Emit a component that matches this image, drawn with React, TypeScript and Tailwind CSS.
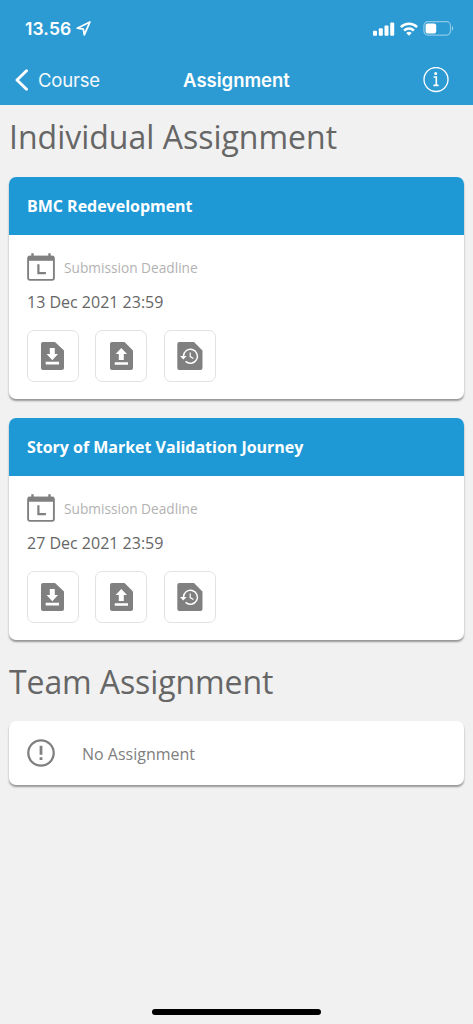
import React from "react";

const assignments = [
  { id: 1, title: "BMC Redevelopment", deadline: "13 Dec 2021 23:59" },
  { id: 2, title: "Story of Market Validation Journey", deadline: "27 Dec 2021 23:59" },
];

const StatusBar = () => (
  <div className="flex h-[55px] items-center justify-between pt-[2px] pl-[25px] pr-[19px]">
    <div className="flex items-center gap-[5px]">
      <span className="text-[17.5px] font-semibold leading-5 tracking-[0.1px]">13.56</span>
      <svg width="15" height="15" viewBox="0 0 15 15" fill="none" stroke="currentColor" strokeWidth="1.8" strokeLinejoin="round">
        <path d="M13.9 1 1.3 7.2l6.1.9.9 5.7z" />
      </svg>
    </div>
    <div className="flex items-center">
      <svg width="22" height="14" viewBox="0 0 22 14" fill="currentColor">
        <rect x="0" y="8.7" width="4" height="5" rx="1" />
        <rect x="5.8" y="6.3" width="4" height="7.4" rx="1" />
        <rect x="11.5" y="3.5" width="4" height="10.2" rx="1" />
        <rect x="17.2" y="0.5" width="4" height="13.2" rx="1" />
      </svg>
      <svg className="ml-[5px]" width="18" height="14" viewBox="0 0 18 14" fill="none" stroke="currentColor" strokeWidth="2.5">
        <path d="M0.9 5.2a11.4 11.4 0 0 1 16.2 0" />
        <path d="M4.1 8.6a6.9 6.9 0 0 1 9.8 0" />
        <path d="M9 13.8 6.3 11.1a3.8 3.8 0 0 1 5.4 0z" fill="currentColor" stroke="none" />
      </svg>
      <svg className="ml-[5px]" width="31" height="15" viewBox="0 0 31 15">
        <rect x="0.9" y="0.7" width="26.6" height="13.4" rx="4" fill="none" stroke="white" strokeOpacity="0.45" strokeWidth="1.2" />
        <rect x="2.6" y="2.4" width="10.6" height="10" rx="2" fill="white" />
        <path d="M29 5.2v4.4c1.6-.6 1.6-3.8 0-4.4z" fill="white" fillOpacity="0.55" />
      </svg>
    </div>
  </div>
);

const Header = () => (
  <header className="h-[105px] bg-[#2d9bd3] font-[Inter,sans-serif] text-white">
    <StatusBar />
    <div className="grid h-[50px] grid-cols-[1fr_auto_1fr] items-center px-[15px]">
      <button className="flex items-center gap-[9px] text-left">
        <svg width="14" height="22" viewBox="0 0 14 22" fill="none" stroke="currentColor" strokeWidth="2.9" strokeLinecap="round" strokeLinejoin="round">
          <path d="M11.5 1.8 2 11l9.5 9.2" />
        </svg>
        <span className="text-[18.5px] leading-6 tracking-[-0.2px] opacity-95">Course</span>
      </button>
      <h1 className="whitespace-nowrap text-center text-[18.5px] font-semibold leading-6">Assignment</h1>
      <button className="mr-[9px] justify-self-end">
        <svg width="26" height="26" viewBox="0 0 26 26" fill="none" stroke="currentColor">
          <circle cx="13" cy="12.5" r="12" strokeWidth="1.3" />
          <circle cx="12.7" cy="6.4" r="1.5" fill="currentColor" stroke="none" />
          <path d="M10.6 10h2.7v8.2M10.4 18.4h5.2" strokeWidth="1.6" />
        </svg>
      </button>
    </div>
  </header>
);

const CalendarIcon = () => (
  <svg width="28" height="28" viewBox="0 0 28 28" fill="none" stroke="#808080">
    <rect x="1.1" y="3.6" width="25.8" height="23.3" rx="1.8" strokeWidth="1.9" />
    <path d="M1 5.3h26" strokeWidth="5" />
    <path d="M5.5.3v4M22.5.3v4" strokeWidth="2.4" />
    <path d="M11.4 11.2v9h7.5" strokeWidth="2.2" />
  </svg>
);

const DownloadIcon = () => (
  <svg width="23" height="28" viewBox="0 0 23 28">
    <path d="M2 0h12l9 8.5V26a2 2 0 0 1-2 2H2a2 2 0 0 1-2-2V2a2 2 0 0 1 2-2z" fill="#808080" />
    <path d="M8.8 6h5v6H17l-5.7 6.3L5.6 12h3.2zM4.7 19.8H18v2.7H4.7z" fill="white" />
  </svg>
);

const UploadIcon = () => (
  <svg width="23" height="28" viewBox="0 0 23 28">
    <path d="M2 0h12.5L23 8.5V26a2 2 0 0 1-2 2H2a2 2 0 0 1-2-2V2a2 2 0 0 1 2-2z" fill="#808080" />
    <path d="M11.3 6 5.6 12.1h3.2V18h5v-5.9H17zM4.7 20.2H18v2.6H4.7z" fill="white" />
  </svg>
);

const HistoryIcon = () => (
  <svg width="26" height="28" viewBox="0 0 26 28">
    <path d="M2.3 0H17l8.5 8.5V26a2 2 0 0 1-2 2H2.3a2 2 0 0 1-2-2V2a2 2 0 0 1 2-2z" fill="#808080" />
    <path d="M6.4 14.3a7 7 0 1 1 2.2 5.1" fill="none" stroke="white" strokeWidth="1.5" />
    <path d="M3 14h6.6l-3.3 3.6z" fill="white" />
    <path d="M13.2 10.4v4.2l3.2 2" fill="none" stroke="white" strokeWidth="1.2" />
  </svg>
);

const ActionButton = ({ children }: { children: React.ReactNode }) => (
  <button className="flex size-[52px] items-center justify-center rounded-[7px] border border-[#e2e2e2] bg-white">
    {children}
  </button>
);

const AssignmentCard = ({ title, deadline }: { title: string; deadline: string }) => (
  <div className="h-[222px] overflow-hidden rounded-[7px] bg-white shadow-[0_2px_2px_rgba(0,0,0,0.38)]">
    <div className="flex h-[58px] items-center bg-[#1e99d6] pl-[18px]">
      <h3 className="whitespace-nowrap text-base font-bold leading-6 tracking-[-0.02px] text-white">{title}</h3>
    </div>
    <div className="pl-[18px] pt-[18px]">
      <div className="flex h-7 items-center gap-[9px]">
        <CalendarIcon />
        <span className="pt-px text-[13.7px] leading-5 text-[#b2b2b2]">Submission Deadline</span>
      </div>
      <p className="mt-[9px] text-base leading-6 text-[#666666]">{deadline}</p>
      <div className="-ml-[0.5px] mt-4 flex gap-[16.5px]">
        <ActionButton>
          <DownloadIcon />
        </ActionButton>
        <ActionButton>
          <UploadIcon />
        </ActionButton>
        <ActionButton>
          <HistoryIcon />
        </ActionButton>
      </div>
    </div>
  </div>
);

const App = () => {
  return (
    <div className="flex h-[1024px] w-[473px] flex-col bg-[#f1f1f1] font-['Open_Sans',sans-serif]">
      <Header />

      <main className="flex-1 px-[9px] pt-[10px]">
        <h2 className="whitespace-nowrap text-[32px] leading-11 text-[#666666]">Individual Assignment</h2>

        <div className="mt-[18px] flex flex-col gap-[19px]">
          {assignments.map((item) => (
            <AssignmentCard key={item.id} title={item.title} deadline={item.deadline} />
          ))}
        </div>

        <h2 className="mt-5 whitespace-nowrap text-[32px] leading-11 tracking-[-0.1px] text-[#666666]">Team Assignment</h2>

        <div className="mt-[17px] flex h-16 items-center rounded-[7px] bg-white pl-[18px] shadow-[0_2px_2px_rgba(0,0,0,0.38)]">
          <svg width="28" height="28" viewBox="0 0 28 28" fill="none" stroke="#808080">
            <circle cx="14" cy="14" r="12.7" strokeWidth="2.3" />
            <path d="M14 6.8v9M14 18.2v2.8" strokeWidth="2.8" />
          </svg>
          <span className="ml-[27px] pt-px text-base leading-6 text-[#808080]">No Assignment</span>
        </div>
      </main>

      {/* Home indicator */}
      <div className="mb-[9px] ml-[152px] h-[6px] w-[169px] rounded-full bg-black" />
    </div>
  );
};

export default App;
